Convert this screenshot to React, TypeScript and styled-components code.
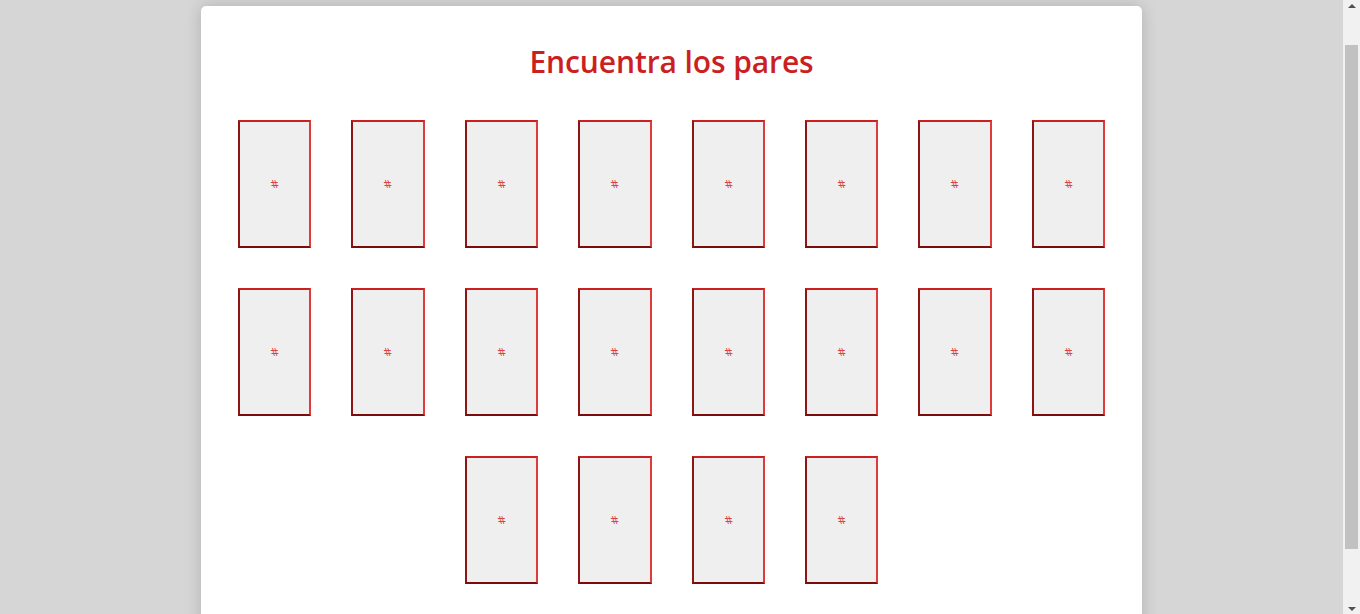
import React from "react";
import styled, { createGlobalStyle } from "styled-components";

const GlobalStyle = createGlobalStyle`
  html {
    background: #d6d6d6;
  }
  body {
    margin: 0 17px 0 0;
    background: #d6d6d6;
    font-family: "Open Sans", "Noto Sans", sans-serif;
  }
`;

const Board = styled.main`
  width: 941px;
  box-sizing: border-box;
  margin: 6px auto 42px;
  padding: 0 16px 30px;
  background: #ffffff;
  border-radius: 5px;
  box-shadow: 0 0 16px rgba(0, 0, 0, 0.18);
`;

const Title = styled.h1`
  margin: 0;
  padding: 36px 0 18px;
  text-align: center;
  font-family: "Open Sans", "Noto Sans", sans-serif;
  font-weight: 600;
  font-size: 30px;
  line-height: 40px;
  letter-spacing: -0.1px;
  color: #cc1f1f;
`;

const Grid = styled.div`
  display: flex;
  flex-wrap: wrap;
  justify-content: center;
`;

const Card = styled.div`
  box-sizing: border-box;
  width: 73.4px;
  height: 128px;
  margin: 20px;
  background: #efefef;
  border-style: solid;
  border-width: 2px;
  border-top-color: #cc1f1f;
  border-left-color: #8f1414;
  border-right-color: #e23a3a;
  border-bottom-color: #7a0c0c;
  display: flex;
  align-items: center;
  justify-content: center;
`;

const Mark = styled.span`
  font-family: "DejaVu Sans", sans-serif;
  font-size: 11px;
  line-height: 1;
  color: rgba(214, 36, 36, 0.85);
  transform: scaleX(-1);
`;

const ScrollTrack = styled.div`
  position: fixed;
  top: 0;
  right: 0;
  width: 17px;
  height: 100vh;
  background: #f1f1f1;
  display: flex;
  flex-direction: column;
  align-items: center;
`;

const Arrow = styled.div<{ $down?: boolean }>`
  width: 0;
  height: 0;
  margin: ${(p) => (p.$down ? "auto 0 3px" : "4px 0 0")};
  border-left: 4px solid transparent;
  border-right: 4px solid transparent;
  ${(p) =>
    p.$down
      ? "border-top: 4px solid #505050;"
      : "border-bottom: 4px solid #505050;"}
`;

const Thumb = styled.div`
  width: 13px;
  height: 504px;
  margin-top: 37px;
  background: #c1c1c1;
`;

export default function App() {
  const cards = Array.from({ length: 20 }, (_, i) => i);
  return (
    <>
      <GlobalStyle />
      <Board>
        <Title>Encuentra los pares</Title>
        <Grid>
          {cards.map((i) => (
            <Card key={i}>
              <Mark>#</Mark>
            </Card>
          ))}
        </Grid>
      </Board>
      <ScrollTrack aria-hidden>
        <Arrow />
        <Thumb />
        <Arrow $down />
      </ScrollTrack>
    </>
  );
}
